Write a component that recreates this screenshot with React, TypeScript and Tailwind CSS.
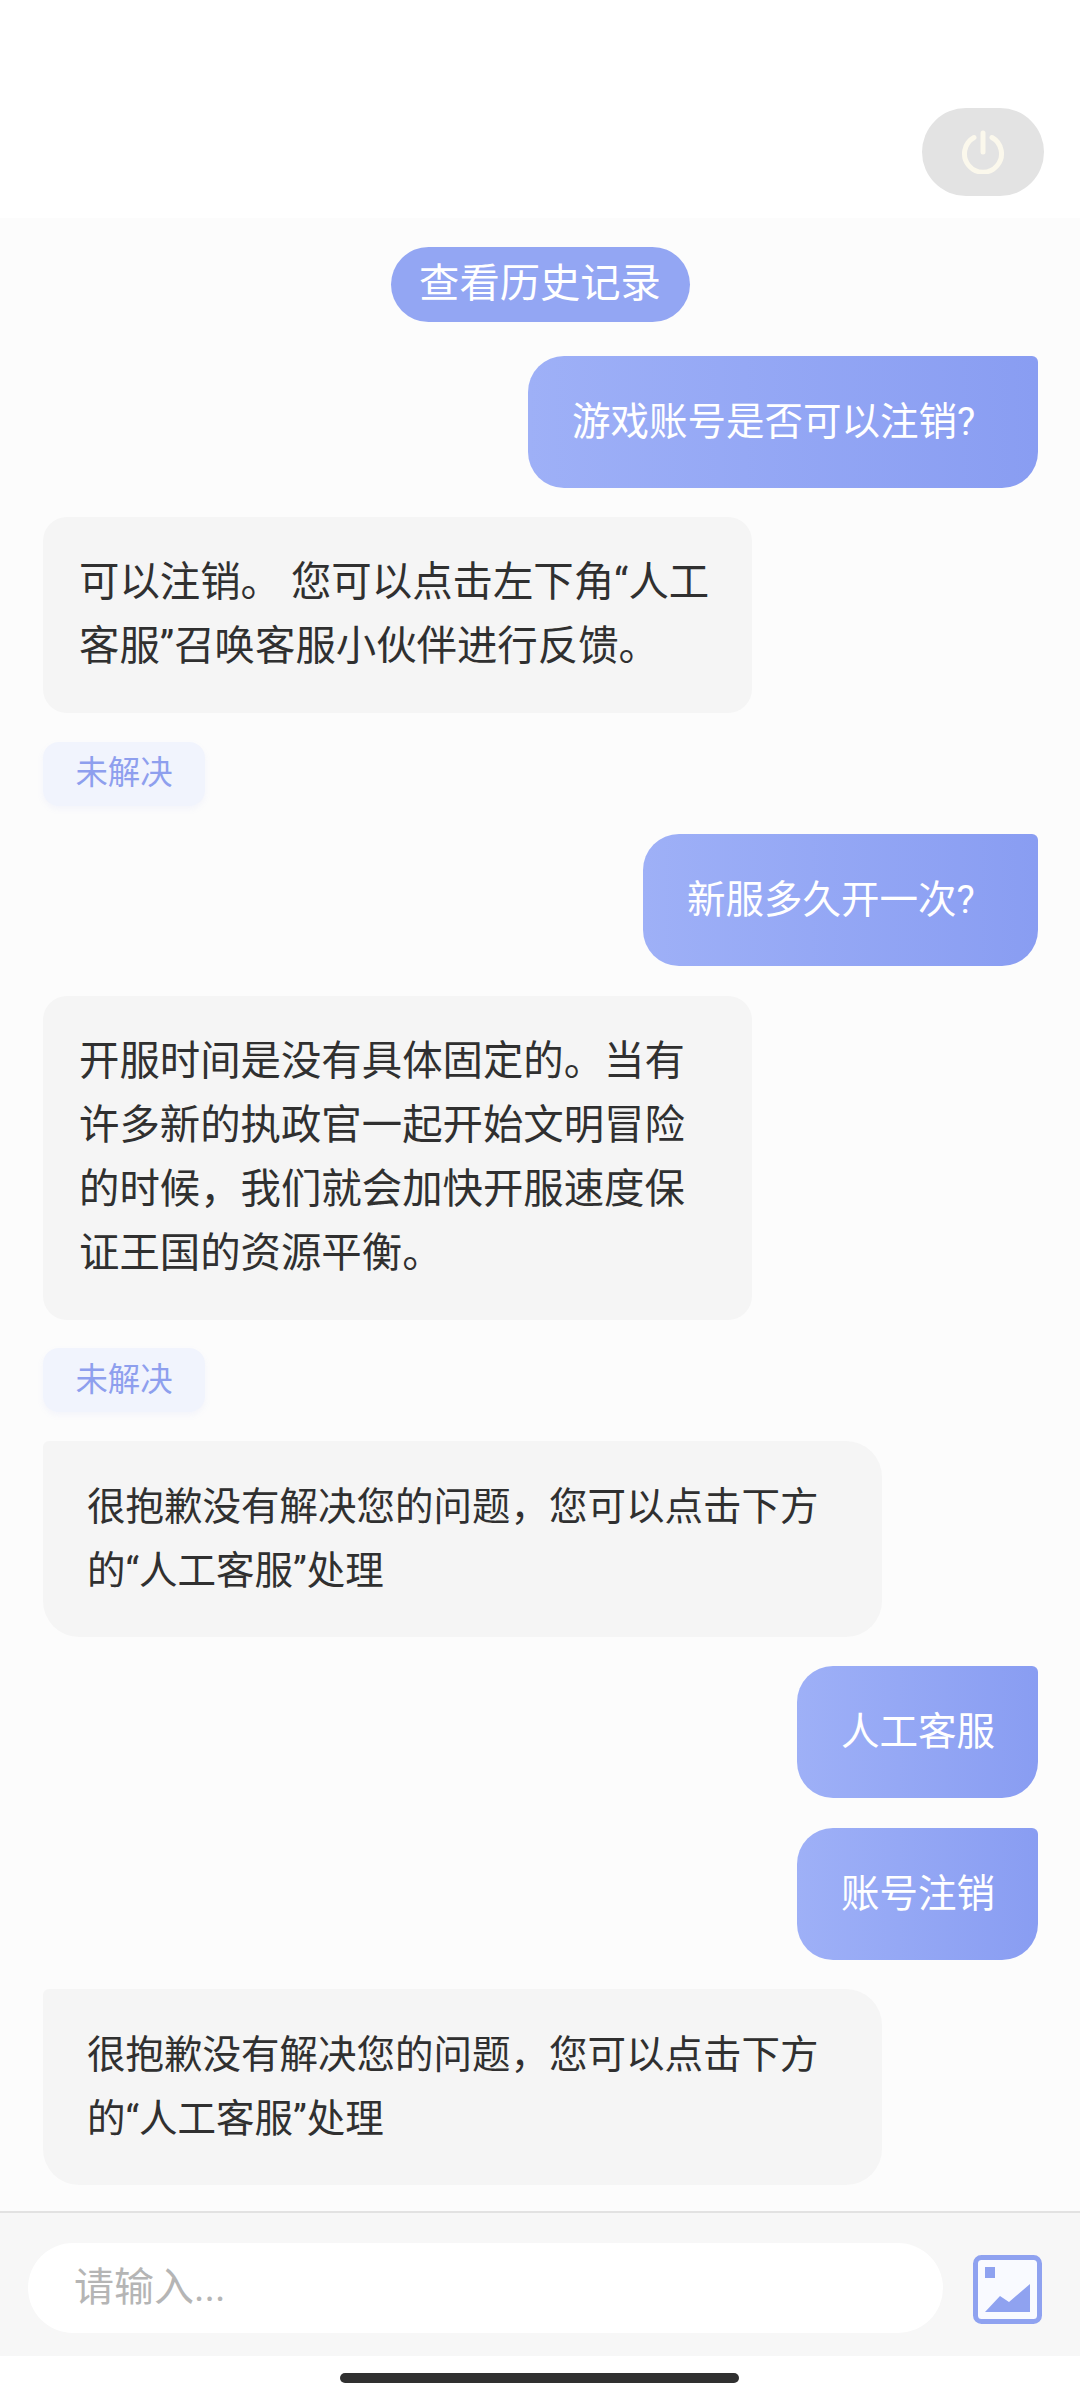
const font = "font-['Roboto','Noto_Sans_CJK_SC',sans-serif]";

function UserBubble({ text, width }: { text: string; width: string }) {
  return (
    <div className="flex justify-end pr-[42px]">
      <div
        className={`flex h-[132px] items-center rounded-[36px] rounded-tr-[6px] bg-gradient-to-r from-[#9eb0f7] to-[#899df2] pl-[44px] text-[38.5px] text-white ${width}`}
      >
        {text}
      </div>
    </div>
  );
}

function BotBubble({ children }: { children: React.ReactNode }) {
  return (
    <div className="ml-[43px] w-[709px] rounded-[24px] bg-[#f5f5f5] px-[36px] py-[34px] text-[40.4px] leading-[64px] text-[#303030]">
      {children}
    </div>
  );
}

function NoticeBubble() {
  return (
    <div className="ml-[43px] w-[839px] rounded-[36px] rounded-tl-[6px] bg-[#f5f5f5] px-[44px] py-[34px] text-[38.5px] leading-[64px] text-[#303030]">
      很抱歉没有解决您的问题，您可以点击下方
      <br />
      的“人工客服”处理
    </div>
  );
}

function Unsolved() {
  return (
    <div className="-my-px ml-[43px] flex h-[64px] w-[162px] items-center justify-center rounded-[16px] bg-[#f1f4fd] text-[32.4px] text-[#8e9fee] shadow-[0_3px_6px_rgba(142,159,238,0.08)]">
      未解决
    </div>
  );
}

export default function App() {
  return (
    <div className={`flex h-[2400px] w-[1080px] flex-col bg-white ${font}`}>
      {/* header */}
      <div className="flex h-[218px] shrink-0 items-start justify-end pr-[36px] pt-[108px]">
        <div className="flex h-[88px] w-[122px] items-center justify-center rounded-[44px] bg-[#e3e3e3]">
          <svg width="44" height="44" viewBox="0 0 44 44" fill="none" stroke="#fbf8ec" strokeWidth="5" strokeLinecap="round">
            <path d="M13 7.5a18.5 18.5 0 1 0 18 0" />
            <path d="M22 3v19" />
          </svg>
        </div>
      </div>

      {/* chat */}
      <div className="flex h-[1995px] shrink-0 flex-col gap-[29.5px] border-b-2 border-[#e2e2e2] bg-[#fcfcfc] pt-[29px]">
        <div className="mb-[4px] flex justify-center">
          <div className="flex h-[75px] w-[299px] items-center justify-center rounded-full bg-[#93a6f3] text-[40.3px] text-white">
            查看历史记录
          </div>
        </div>
        <UserBubble text="游戏账号是否可以注销?" width="w-[510px]" />
        <BotBubble>
          可以注销。 您可以点击左下角“人工
          <br />
          客服”召唤客服小伙伴进行反馈。
        </BotBubble>
        <Unsolved />
        <UserBubble text="新服多久开一次?" width="w-[395px]" />
        <BotBubble>
          开服时间是没有具体固定的。当有
          <br />
          许多新的执政官一起开始文明冒险
          <br />
          的时候，我们就会加快开服速度保
          <br />
          证王国的资源平衡。
        </BotBubble>
        <Unsolved />
        <NoticeBubble />
        <UserBubble text="人工客服" width="w-[241px]" />
        <UserBubble text="账号注销" width="w-[241px]" />
        <NoticeBubble />
      </div>

      {/* input */}
      <div className="flex h-[143px] shrink-0 items-start bg-[#f7f7f7] pl-[28px] pt-[30px]">
        <div className="flex h-[90px] w-[915px] items-center rounded-[45px] bg-white pl-[46px] text-[40px] text-[#b5b5b5]">
          请输入...
        </div>
        <svg className="ml-[30px] mt-[12px]" width="69" height="69" viewBox="0 0 69 69" fill="none">
          <rect x="2.5" y="2.5" width="64" height="64" rx="6" fill="#f9faff" stroke="#8fa2f0" strokeWidth="5" />
          <rect x="12" y="12" width="10" height="11" fill="#8fa2f0" />
          <path d="M12 57 L27 41 L36 47 L57 29 V57 Z" fill="#8fa2f0" />
        </svg>
      </div>

      {/* home indicator */}
      <div className="flex flex-1 items-start justify-center pr-px pt-[17px]">
        <div className="h-[10px] w-[399px] rounded-full bg-[#303030]" />
      </div>
    </div>
  );
}
